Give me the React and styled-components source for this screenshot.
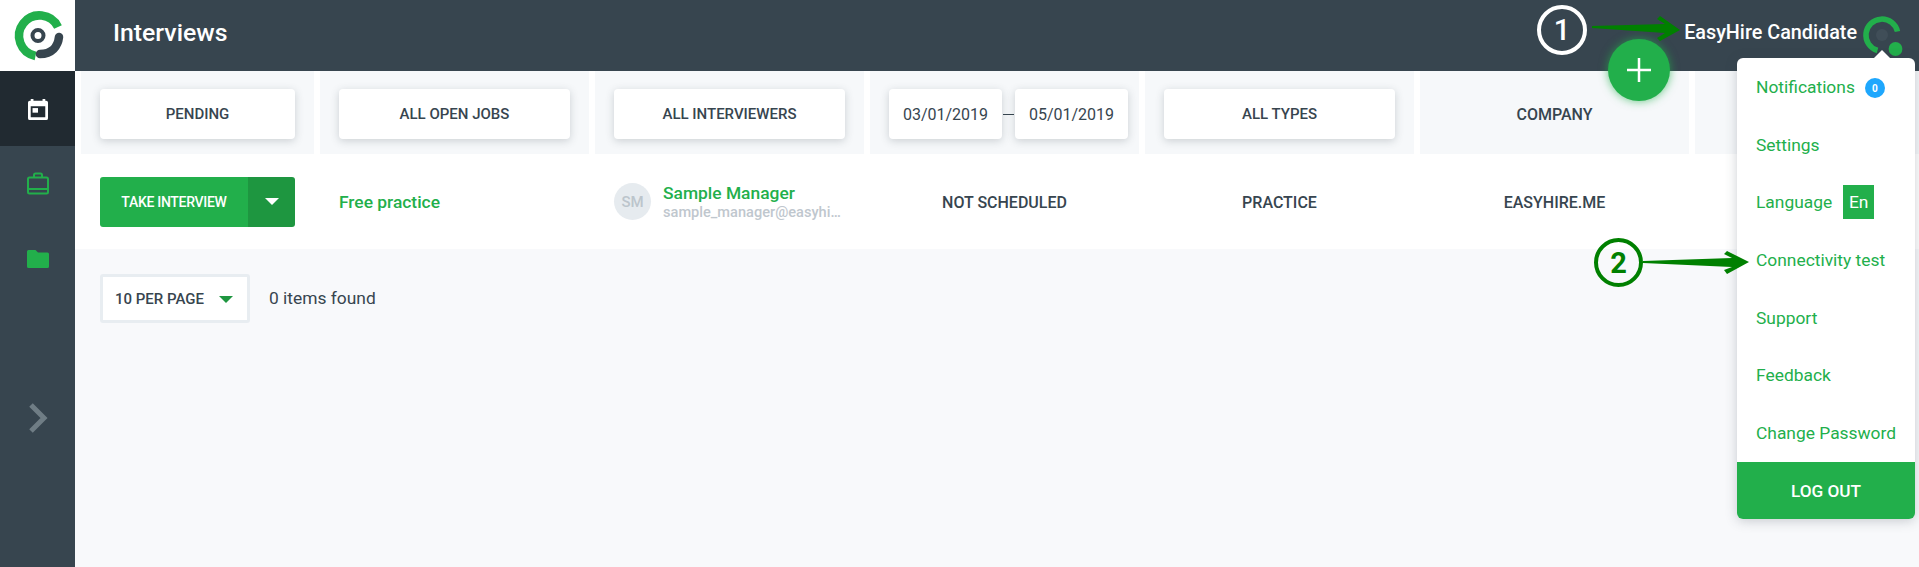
import React from 'react';
import styled, { createGlobalStyle } from 'styled-components';

const GREEN = '#22af4b';
const DARK = '#37454f';

const Global = createGlobalStyle`
  html, body { margin: 0; padding: 0; background: #f8f9fb; }
  body { font-family: Roboto, "Liberation Sans", sans-serif; color: ${DARK}; }
  * { box-sizing: border-box; }
`;

const Page = styled.div`
  position: relative;
  display: flex;
  width: 1919px;
  height: 567px;
  overflow: hidden;
  background: #f8f9fb;
`;
const Sidebar = styled.aside`
  flex: 0 0 75px;
  display: flex;
  flex-direction: column;
  background: ${DARK};
`;
const LogoCell = styled.div`
  height: 71px;
  background: #fff;
  display: flex;
  align-items: center;
  justify-content: center;
`;
const NavItem = styled.div`
  height: 75px;
  display: flex;
  align-items: center;
  justify-content: center;
  background: ${p => (p.$active ? '#212a31' : 'transparent')};
`;
const Expand = styled.div`
  margin-top: 100px;
  height: 44px;
  display: flex;
  align-items: center;
  justify-content: center;
`;
const Main = styled.main`
  flex: 1;
  min-width: 0;
  display: flex;
  flex-direction: column;
`;
const Header = styled.header`
  height: 71px;
  flex: none;
  background: ${DARK};
  display: flex;
  align-items: center;
  justify-content: space-between;
  padding: 0 19px 6px 38px;
`;
const Title = styled.h1`
  margin: 0;
  font-size: 24.8px;
  font-weight: 500;
  color: #fff;
`;
const User = styled.div`
  display: flex;
  align-items: center;
  gap: 7px;
  color: #fff;
  font-size: 19.8px;
  font-weight: 500;
`;
const Ring = styled.svg`
  margin-top: 11px;
  overflow: visible;
`;
const Grid = styled.div`
  display: grid;
  grid-template-columns: 233px repeat(6, 269px);
  column-gap: 6px;
  padding-left: 6px;
  width: 1900px;
  background: #fff;
`;
const FilterCell = styled.div`
  height: 83px;
  background: #f6f8fa;
  padding: 18px ${p => (p.$between ? 11 : 19)}px 15px 19px;
  display: flex;
  align-items: center;
  justify-content: ${p => (p.$between ? 'space-between' : 'center')};
  font-size: 16px;
  font-weight: 500;
`;
const FilterButton = styled.div`
  flex: 1;
  height: 50px;
  background: #fff;
  border-radius: 4px;
  box-shadow: 0 2px 8px rgba(55, 69, 79, 0.22);
  display: flex;
  align-items: center;
  justify-content: center;
  font-size: 15px;
  font-weight: 500;
`;
const DateBox = styled(FilterButton)`
  flex: 0 0 113px;
  font-size: 16px;
  font-weight: 400;
`;
const Dash = styled.span`
  width: 11px;
  height: 1px;
  background: ${DARK};
`;
const Row = styled(Grid)`
  height: 95px;
`;
const RowCell = styled.div`
  padding: ${p => (p.$center ? '1px' : '0')} 19px 0;
  display: flex;
  align-items: center;
  justify-content: ${p => (p.$center ? 'center' : 'flex-start')};
  font-size: 16px;
  font-weight: 500;
  min-width: 0;
`;
const SplitButton = styled.div`
  flex: 1;
  height: 50px;
  display: flex;
  border-radius: 3px;
  overflow: hidden;
  color: #fff;
`;
const TakeLabel = styled.div`
  flex: 1;
  background: ${GREEN};
  display: flex;
  align-items: center;
  justify-content: center;
  font-size: 14px;
  font-weight: 500;
  letter-spacing: -0.3px;
`;
const TakeCaret = styled.div`
  flex: 0 0 47px;
  background: #1e9640;
  display: flex;
  align-items: center;
  justify-content: center;
`;
const Caret = styled.span`
  width: 0;
  height: 0;
  border-left: 7px solid transparent;
  border-right: 7px solid transparent;
  border-top: 7px solid ${p => p.$color};
`;
const GreenText = styled.span`
  color: ${GREEN};
  font-size: 17.4px;
  font-weight: 500;
`;
const Avatar = styled.div`
  flex: 0 0 37px;
  height: 37px;
  border-radius: 50%;
  background: #e6ebef;
  color: #bcc5cc;
  font-size: 15px;
  font-weight: 500;
  display: flex;
  align-items: center;
  justify-content: center;
  margin-right: 12px;
`;
const Person = styled.div`
  min-width: 0;
  flex: 1;
  display: flex;
  flex-direction: column;
  gap: 1px;
  line-height: 19px;
`;
const Email = styled.div`
  font-size: 14.6px;
  line-height: 16px;
  font-weight: 500;
  color: #bfc7ce;
  white-space: nowrap;
  overflow: hidden;
  text-overflow: ellipsis;
`;
const Footer = styled.div`
  display: flex;
  align-items: center;
  gap: 19px;
  padding: 25px 25px 0;
`;
const PerPage = styled.div`
  width: 150px;
  height: 49px;
  background: #fff;
  border: 3px solid #e8edf1;
  border-radius: 3px;
  display: flex;
  align-items: center;
  justify-content: space-between;
  padding: 1px 14px 0 12px;
  font-size: 15px;
  font-weight: 500;
`;
const Found = styled.span`
  font-size: 17.4px;
  margin-top: -2px;
`;
const Fab = styled.div`
  position: absolute;
  left: 1608px;
  top: 39px;
  width: 62px;
  height: 62px;
  border-radius: 50%;
  background: ${GREEN};
  box-shadow: 0 0 10px rgba(34, 175, 75, 0.7);
  display: flex;
  align-items: center;
  justify-content: center;
`;
const Menu = styled.nav`
  position: absolute;
  left: 1737px;
  top: 58px;
  width: 178px;
  height: 461px;
  background: #fff;
  border-radius: 6px;
  box-shadow: 0 2px 12px rgba(55, 69, 79, 0.25);
  display: flex;
  flex-direction: column;
  &::before {
    content: '';
    position: absolute;
    left: 137px;
    top: -8px;
    border-left: 8px solid transparent;
    border-right: 8px solid transparent;
    border-bottom: 8px solid #fff;
  }
`;
const MenuItem = styled.div`
  flex: 1;
  display: flex;
  align-items: center;
  padding-left: 19px;
  color: ${GREEN};
  font-size: 17.4px;
`;
const Badge = styled.span`
  width: 20px;
  height: 20px;
  border-radius: 50%;
  margin: 3px 0 0 10px;
  background: #1ea7fd;
  color: #fff;
  font-size: 10px;
  font-weight: 700;
  display: flex;
  align-items: center;
  justify-content: center;
`;
const Lang = styled.span`
  width: 31px;
  height: 34px;
  margin-left: 11px;
  background: ${GREEN};
  color: #fff;
  display: flex;
  align-items: center;
  justify-content: center;
`;
const Logout = styled.div`
  flex: 0 0 57px;
  background: ${GREEN};
  color: #fff;
  font-size: 17.2px;
  font-weight: 500;
  border-radius: 0 0 6px 6px;
  display: flex;
  align-items: center;
  justify-content: center;
`;
const Marker = styled.div`
  position: absolute;
  left: ${p => p.$x}px;
  top: ${p => p.$y}px;
  width: ${p => p.$size}px;
  height: ${p => p.$size}px;
  border: ${p => p.$line}px solid ${p => p.$color};
  border-radius: 50%;
  color: ${p => p.$color};
  font-size: 29px;
  font-weight: ${p => p.$weight};
  display: flex;
  align-items: center;
  justify-content: center;
`;
const Overlay = styled.svg`
  position: absolute;
  left: 0;
  top: 0;
  pointer-events: none;
`;

const Logo = () => (
  <svg width="60" height="60" viewBox="0 0 60 60" style={{ marginTop: 1 }}>
    <path d="M27.5 50 A20.5 20.5 0 1 1 50 21" fill="none" stroke={GREEN} strokeWidth="8.5" />
    <path d="M32 48 C44 48 50 40 51 31" fill="none" stroke={DARK} strokeWidth="8.5" strokeLinecap="round" />
    <circle cx="30" cy="29.5" r="5.5" fill="none" stroke={DARK} strokeWidth="4" />
  </svg>
);
const CalendarIcon = () => (
  <svg width="20" height="22" viewBox="0 0 22 24" preserveAspectRatio="none">
    <path d="M3 1h3v2h10V1h3v2h1a2 2 0 0 1 2 2v17a2 2 0 0 1-2 2H2a2 2 0 0 1-2-2V5a2 2 0 0 1 2-2h1z" fill="#fff" />
    <rect x="3" y="9" width="16" height="12" fill="#212a31" />
    <rect x="5" y="11" width="6" height="5" fill="#fff" />
  </svg>
);
const BriefcaseIcon = () => (
  <svg width="24" height="24" viewBox="0 0 24 24" fill="none" stroke={GREEN} strokeWidth="2">
    <rect x="2" y="5.5" width="20" height="16" rx="1.5" />
    <path d="M8 5.5V3a1.5 1.5 0 0 1 1.5-1.5h5A1.5 1.5 0 0 1 16 3v2.5M2 17h20" />
  </svg>
);
const FolderIcon = () => (
  <svg width="24" height="20" viewBox="0 0 24 20">
    <path d="M2.5 1h7l2.5 2.5h9.5A1.5 1.5 0 0 1 23 5v12.5a1.5 1.5 0 0 1-1.5 1.5h-19A1.5 1.5 0 0 1 1 17.5V2.5A1.5 1.5 0 0 1 2.5 1z" fill={GREEN} />
  </svg>
);
const ChevronIcon = () => (
  <svg width="20" height="30" viewBox="0 0 20 30" fill="none" stroke="#6f7d85" strokeWidth="5">
    <path d="M3 2 L16 15 L3 28" />
  </svg>
);
const UserRing = () => (
  <Ring width="36" height="42" viewBox="0 0 36 42">
    <circle cx="18" cy="18" r="6" fill="#404e58" />
    <path d="M13.5 33.5 A16 16 0 1 1 33.5 14.5" fill="none" stroke={GREEN} strokeWidth="5.5" />
    <circle cx="31.5" cy="32" r="6.9" fill={GREEN} />
  </Ring>
);
const Plus = () => (
  <svg width="24" height="24" viewBox="0 0 24 24" stroke="#fff" strokeWidth="2.5">
    <path d="M12 0V24M0 12H24" />
  </svg>
);

const items = ['Settings'];
const lowerItems = ['Connectivity test', 'Support', 'Feedback', 'Change Password'];

export default function App() {
  return (
    <Page>
      <Global />
      <Sidebar>
        <LogoCell><Logo /></LogoCell>
        <NavItem $active><CalendarIcon /></NavItem>
        <NavItem><BriefcaseIcon /></NavItem>
        <NavItem><FolderIcon /></NavItem>
        <Expand><ChevronIcon /></Expand>
      </Sidebar>
      <Main>
        <Header>
          <Title>Interviews</Title>
          <User>EasyHire Candidate <UserRing /></User>
        </Header>
        <Grid>
          <FilterCell><FilterButton>PENDING</FilterButton></FilterCell>
          <FilterCell><FilterButton>ALL OPEN JOBS</FilterButton></FilterCell>
          <FilterCell><FilterButton>ALL INTERVIEWERS</FilterButton></FilterCell>
          <FilterCell $between>
            <DateBox>03/01/2019</DateBox>
            <Dash />
            <DateBox>05/01/2019</DateBox>
          </FilterCell>
          <FilterCell><FilterButton>ALL TYPES</FilterButton></FilterCell>
          <FilterCell>COMPANY</FilterCell>
          <FilterCell />
        </Grid>
        <Row>
          <RowCell>
            <SplitButton>
              <TakeLabel>TAKE INTERVIEW</TakeLabel>
              <TakeCaret><Caret $color="#fff" /></TakeCaret>
            </SplitButton>
          </RowCell>
          <RowCell><GreenText>Free practice</GreenText></RowCell>
          <RowCell>
            <Avatar>SM</Avatar>
            <Person>
              <GreenText>Sample Manager</GreenText>
              <Email>sample_manager@easyhire.me</Email>
            </Person>
          </RowCell>
          <RowCell $center>NOT SCHEDULED</RowCell>
          <RowCell $center>PRACTICE</RowCell>
          <RowCell $center>EASYHIRE.ME</RowCell>
          <RowCell />
        </Row>
        <Footer>
          <PerPage>10 PER PAGE <Caret $color="#1e9640" /></PerPage>
          <Found>0 items found</Found>
        </Footer>
      </Main>
      <Fab><Plus /></Fab>
      <Menu>
        <MenuItem>Notifications <Badge>0</Badge></MenuItem>
        {items.map(t => <MenuItem key={t}>{t}</MenuItem>)}
        <MenuItem>Language <Lang>En</Lang></MenuItem>
        {lowerItems.map(t => <MenuItem key={t}>{t}</MenuItem>)}
        <Logout>LOG OUT</Logout>
      </Menu>
      <Marker $x={1537} $y={5} $size={50} $line={4} $color="#fff" $weight={500}>1</Marker>
      <Marker $x={1594} $y={238} $size={49} $line={4} $color="#008000" $weight={700}>2</Marker>
      <Overlay width="1919" height="567" viewBox="0 0 1919 567">
        <polygon fill="#008000" points="1592,26 1665,24 1657,19 1660,16 1680,30 1660,41 1657,38 1665,33 1592,28" />
        <polygon fill="#008000" points="1643,261 1732,258 1724,254 1727,251 1749,262 1727,274 1724,270 1732,267 1643,263" />
      </Overlay>
    </Page>
  );
}
